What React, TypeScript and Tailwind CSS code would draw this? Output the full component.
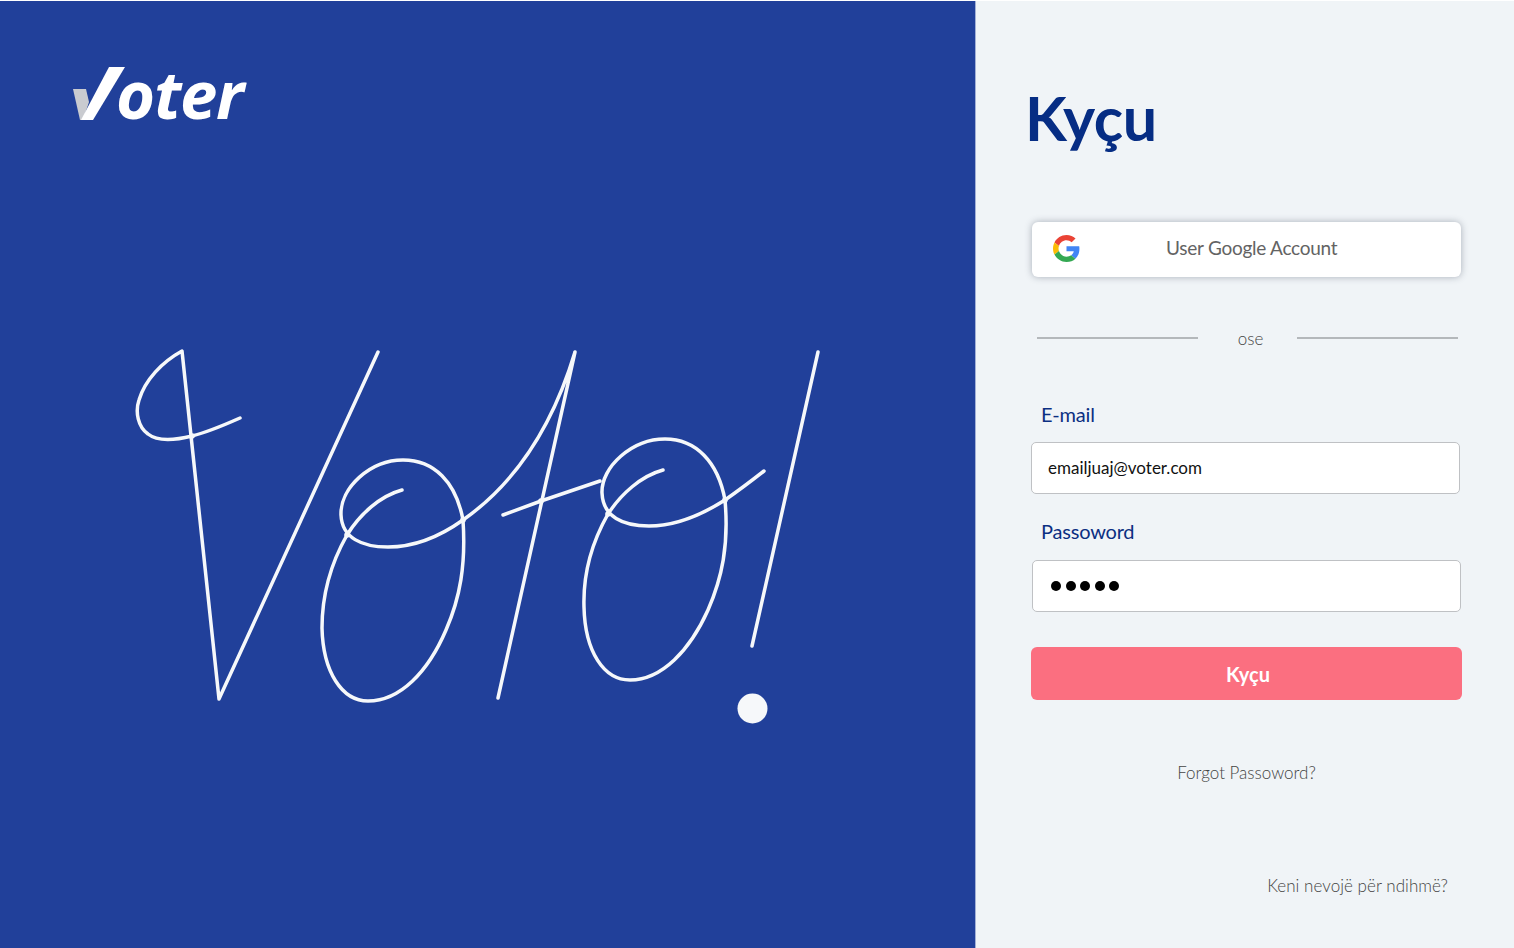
const font = "font-['Lato','Noto_Sans',sans-serif]"

const crossings = [
  [192, 436],
  [347, 535],
  [463, 520],
  [541, 501],
  [608, 514],
  [725, 500],
]

function GoogleIcon() {
  return (
    <svg viewBox="0 0 48 48" className="w-[27px] h-[27px] shrink-0">
      <path fill="#EA4335" d="M24 9.5c3.5 0 6.700 1.200 9.200 3.600l6.900-6.900C35.900 2.400 30.500 0 24 0 14.600 0 6.500 5.400 2.600 13.200l8 6.200C12.500 13.700 17.800 9.500 24 9.500z" />
      <path fill="#4285F4" d="M47 24.500c0-1.600-.1-3.100-.4-4.500H24v9h12.900c-.6 3-2.200 5.500-4.700 7.200l7.700 6c4.500-4.200 7.100-10.300 7.100-17.700z" />
      <path fill="#FBBC05" d="M10.600 28.600c-.5-1.400-.8-3-.8-4.600s.3-3.200.8-4.600l-8-6.200C.9 16.500 0 20.100 0 24s.9 7.500 2.600 10.800l8-6.200z" />
      <path fill="#34A853" d="M24 48c6.500 0 11.900-2.100 15.900-5.800l-7.700-6c-2.100 1.400-4.900 2.300-8.200 2.300-6.200 0-11.500-4.200-13.400-9.900l-8 6.200C6.500 42.600 14.600 48 24 48z" />
    </svg>
  )
}

function Logo() {
  return (
    <div className="flex items-end h-[56px]">
      <svg viewBox="73 66 52 55" className="w-[52px] h-[55px] shrink-0">
        <polygon fill="#c9cbd0" points="73,89 86,89 89,102 83,120 80,120" />
        <polygon fill="#ffffff" points="109,67 125,67 93,120 81,120" />
      </svg>
      <span className="text-white italic font-bold text-[67px] leading-[56px] tracking-[-1.3px] -ml-[9px] font-['Open_Sans',sans-serif]">oter</span>
    </div>
  )
}

function VoteDrawing() {
  return (
    <svg viewBox="120 340 720 400" className="w-[720px] h-[400px]" fill="none" stroke="#f6f8fa" strokeWidth="3.5" strokeLinecap="round" strokeLinejoin="round">
      <path d="M240 418 C222 426 208 432 192 436 C176 440 158 442 148 434 C138 427 135 412 139 400 C145 380 162 362 182 351 L219 699 L378 352" />
      <path d="M402 490 C380 496 360 514 347 535 C330 565 322 595 322 628 C323 672 342 701 368 701 C400 701 428 672 446 630 C460 598 466 565 463 520 C456 482 434 460 403 460 C370 460 340 488 341 515 C342 538 362 547 388 547 C415 547 442 535 463 520 C510 487 550 435 575 352 L498 698" />
      <path d="M503 515 L541 501 L600 481" />
      <path d="M663 470 C641 476 621 494 608 514 C591 544 583 575 584 607 C585 652 604 680 630 680 C662 680 690 650 708 610 C722 578 729 545 725 500 C718 462 696 439 665 439 C632 439 601 467 602 493 C603 517 623 526 649 526 C676 526 703 514 725 500 C738 491 750 482 764 471" />
      <path d="M818 352 L752 646" />
      {crossings.map(([x, y]) => (
        <circle key={x} cx={x} cy={y} r="2.800" fill="#f6f8fa" stroke="none" />
      ))}
      <circle cx="752.500" cy="708.500" r="15" fill="#f6f8fa" stroke="none" />
    </svg>
  )
}

export default function App() {
  return (
    <div className={`flex h-[948px] w-[1514px] overflow-hidden pt-[1px] ${font}`}>
      <div className="w-[975px] shrink-0 bg-[#21409a] pt-[64px] pl-[73px]">
        <Logo />
        <div className="mt-[219px] -ml-[73px] pl-[120px]">
          <VoteDrawing />
        </div>
      </div>

      <div className="flex-1 bg-[#f0f4f7] border-l border-[#a3b1d6] pl-[56px]">
        <h1 className="mt-[81px] -ml-[7px] text-[61px] leading-[72px] font-bold text-[#062d84] tracking-[-0.5px]">Kyçu</h1>

        <button className="mt-[68px] relative flex items-center w-[429px] h-[55px] pl-[21px] pb-[3px] bg-white rounded-[6px] shadow-[0_0_7px_rgba(60,70,90,0.4)]">
          <GoogleIcon />
          <span className="absolute left-[134px] text-[19px] text-[#636363] tracking-[-0.25px]">User Google Account</span>
        </button>

        <div className="mt-[51px] flex items-center pl-[5px] w-[426px]">
          <div className="w-[161px] h-[1.500px] bg-[#b4b8bb]" />
          <span className="flex-1 text-center text-[17px] leading-[20px] font-light text-[#444] pl-[6px] translate-y-[1px]">ose</span>
          <div className="w-[161px] h-[1.500px] bg-[#b4b8bb]" />
        </div>

        <label className="block mt-[53px] pl-[9px] text-[20px] leading-[26px] text-[#0b2f82] tracking-[-0.2px]">E-mail</label>
        <div className="mt-[15px] -ml-[1px] flex items-center w-[429px] h-[52px] pl-[16px] bg-white rounded-[5px] border border-[#bfc1c4] text-[17px] text-[#111]">
          emailjuaj@voter.com
        </div>

        <label className="block mt-[24px] pl-[9px] text-[20px] leading-[26px] text-[#0b2f82] tracking-[-0.2px]">Passoword</label>
        <div className="mt-[16px] flex items-center gap-[4.500px] w-[429px] h-[52px] pl-[18px] bg-white rounded-[5px] border border-[#bfc1c4]">
          {[0, 1, 2, 3, 4].map((i) => (
            <span key={i} className="w-[10px] h-[10px] rounded-full bg-black" />
          ))}
        </div>

        <button className="mt-[35px] -ml-[1px] block w-[431px] h-[53px] pl-[3px] rounded-[6px] bg-[#fb6f80] text-white text-[20px] font-bold">Kyçu</button>

        <p className="mt-[61px] -ml-[1px] text-center w-[431px] text-[17px] leading-[24px] font-light text-[#444]">Forgot Passoword?</p>

        <p className="mt-[89px] w-[416px] text-right text-[17px] leading-[24px] font-light text-[#444] tracking-[0.05px]">Keni nevojë për ndihmë?</p>
      </div>
    </div>
  )
}
